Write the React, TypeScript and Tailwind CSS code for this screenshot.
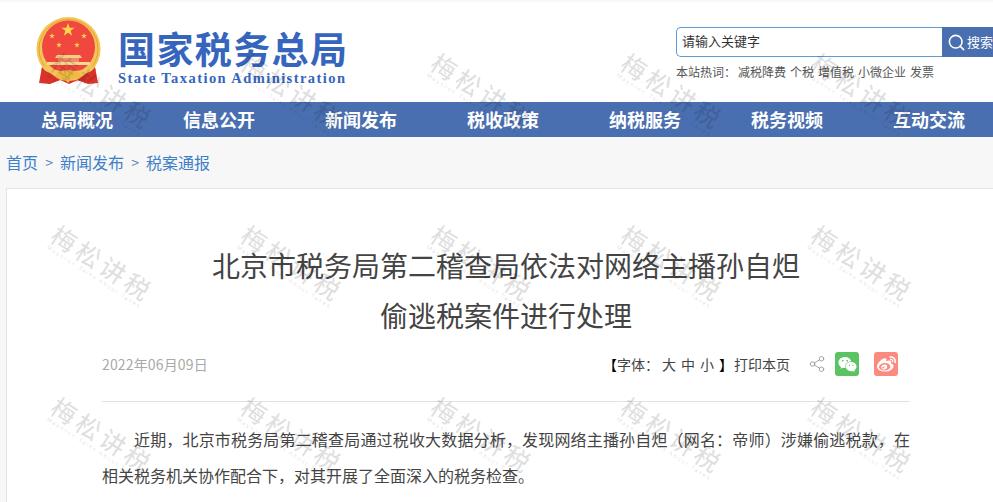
import { Search, Share2 } from "lucide-react"
import { FaWeibo, FaWeixin } from "react-icons/fa"

const navItems = ["总局概况", "信息公开", "新闻发布", "税收政策", "纳税服务", "税务视频", "互动交流"]
const hotWords = ["减税降费", "个税", "增值税", "小微企业", "发票"]
const crumbs = ["首页", "新闻发布", "税案通报"]

const starPoints = (cx: number, cy: number, r: number) =>
  Array.from({ length: 10 }, (_, i) => {
    const a = (Math.PI / 5) * i - Math.PI / 2
    const d = i % 2 === 0 ? r : r * 0.4
    return `${(cx + d * Math.cos(a)).toFixed(2)},${(cy + d * Math.sin(a)).toFixed(2)}`
  }).join(" ")

const Emblem = () => (
  <svg width="66" height="70" viewBox="0 0 66 70" className="shrink-0">
    <path d="M6 50 L3 66 L14 67 L24 63 L33 67 L42 63 L52 67 L62 66 L59 50 Z" fill="#d9342b" />
    <circle cx="32.5" cy="32" r="32" fill="#f4c65a" />
    <circle cx="32.5" cy="32" r="29.5" fill="none" stroke="#e3a32f" strokeWidth="1" />
    <circle cx="32.5" cy="30" r="26.5" fill="#f0483e" />
    <polygon points={starPoints(32, 13, 7)} fill="#fbd34d" />
    <polygon points={starPoints(16, 19, 3)} fill="#fbd34d" />
    <polygon points={starPoints(48, 19, 3)} fill="#fbd34d" />
    <polygon points={starPoints(23, 28, 3)} fill="#fbd34d" />
    <polygon points={starPoints(41, 28, 3)} fill="#fbd34d" />
    <path d="M21 38 H44 L46 41 H19 Z" fill="#f7cf80" />
    <rect x="22" y="41" width="21" height="4" fill="#f08a6a" />
    <rect x="11" y="45" width="43" height="3" fill="#f6d98a" />
    <path d="M8 49 Q32 60 57 49 L54 56 Q32 66 11 56 Z" fill="#f4c65a" />
    <path d="M21 56 Q32 50 44 56 L47 63 L37 60 L32 66 L27 60 L18 63 Z" fill="#edbb44" />
    <path d="M24 63 L12 67 L5 52 L14 56 Z" fill="#d9342b" />
    <path d="M41 63 L53 67 L60 52 L51 56 Z" fill="#d9342b" />
  </svg>
)

const Watermark = () => (
  <div className="flex h-[172px] w-[190px] items-center justify-center">
    <div className="flex rotate-[33deg] flex-col items-center whitespace-nowrap">
      <span className="text-[25px] leading-[26px] font-medium tracking-[4px] text-black/12">梅松讲税</span>
      <span className="font-['Liberation_Sans',sans-serif] text-[6px] leading-[8px] tracking-[1.5px] text-black/15">
        Maysoon Talks About Taxes
      </span>
    </div>
  </div>
)

export default function App() {
  return (
    <div className="relative h-screen overflow-hidden bg-[#f7f7f7] font-['Noto_Sans_CJK_SC',sans-serif]">
      <div className="w-[1006px]">
        <header className="mt-[2px] flex h-[100px] w-[993px] justify-between bg-white pl-[36px]">
          <div className="flex items-start pt-[15px]">
            <Emblem />
            <div className="ml-[16px] flex w-[230px] flex-col pt-[9px]">
              <span className="text-[37px] leading-[44px] font-bold tracking-[1.4px] whitespace-nowrap text-[#3565bd]">
                国家税务总局
              </span>
              <span className="mt-[1px] font-['Liberation_Serif',serif] text-[14.5px] leading-[15px] font-bold tracking-[1.43px] whitespace-nowrap text-[#3565bd]">
                State Taxation Administration
              </span>
            </div>
          </div>
          <div className="w-[317px] shrink-0 overflow-hidden pt-[25px]">
            <div className="flex h-[30px] w-[340px]">
              <div className="flex w-[266px] items-center rounded-l-[5px] border border-r-0 border-[#5a9bd8] pb-[2px] pl-[5px] text-[13px] text-[#333]">
                请输入关键字
              </div>
              <div className="flex w-[74px] items-center gap-[1px] bg-[#4a6fb0] pl-[5px] text-[13px] text-white">
                <Search size={19} strokeWidth={2} />
                搜索
              </div>
            </div>
            <div className="mt-[7px] flex items-center text-[12px] leading-[16px] text-[#555]">
              <span className="mr-[2px]">本站热词：</span>
              <div className="flex gap-[4px]">
                {hotWords.map((word) => (
                  <span key={word}>{word}</span>
                ))}
              </div>
            </div>
          </div>
        </header>

        <nav className="flex h-[35px] items-center bg-[#4a6fb0] pl-[6px]">
          {navItems.map((item) => (
            <a key={item} className="w-[142px] text-center text-[18px] font-bold text-white">
              {item}
            </a>
          ))}
        </nav>

        <div className="flex h-[51px] items-center gap-[6px] pb-[1px] pl-[6px] text-[16px] text-[#3f7fc9]">
          {crumbs.map((crumb, i) => (
            <span key={crumb} className="flex items-center gap-[6px]">
              {i > 0 && <span className="w-[10px] text-center text-[14px] text-[#5a7fb5]">&gt;</span>}
              {crumb}
            </span>
          ))}
        </div>

        <main className="ml-[6px] border border-[#e5e5e5] bg-white px-[95px] pt-[51px] pb-[40px]">
          <h1 className="text-center text-[28px] leading-[50px] font-normal text-[#444]">
            北京市税务局第二稽查局依法对网络主播孙自炟
            <br />
            偷逃税案件进行处理
          </h1>

          <div className="mt-[12px] flex h-[24px] items-center justify-between">
            <span className="text-[14px] tracking-[0.15px] text-[#a9a9a9]">2022年06月09日</span>
            <div className="flex items-center pr-[12px] text-[14px] text-[#444]">
              <span className="text-black">【</span>
              <span>字体：</span>
              <span className="ml-[3px] tracking-[5px]">大中小</span>
              <span className="text-black">】</span>
              <span className="ml-[1px]">打印本页</span>
              <Share2 size={18} strokeWidth={1} className="ml-[18px] text-[#888]" />
              <span className="ml-[9px] flex h-[24px] w-[24px] items-center justify-center rounded-[3px] bg-[#5ac463] text-white">
                <FaWeixin size={19} />
              </span>
              <span className="ml-[15px] flex h-[24px] w-[24px] items-center justify-center rounded-[3px] bg-[#fb8a7f] text-white">
                <FaWeibo size={19} />
              </span>
            </div>
          </div>

          <div className="mt-[25px] border-t border-[#e2e2e2] pt-[19px]">
            <p className="text-justify indent-[32px] text-[16px] leading-[36px] text-[#444]">
              近期，北京市税务局第二稽查局通过税收大数据分析，发现网络主播孙自炟（网名：帝师）涉嫌偷逃税款，在相关税务机关协作配合下，对其开展了全面深入的税务检查。
            </p>
          </div>
        </main>
      </div>

      <div className="pointer-events-none absolute inset-0 grid grid-cols-[repeat(5,190px)] auto-rows-[172px] pt-[8px] pl-[6px]">
        {Array.from({ length: 15 }, (_, i) => (
          <Watermark key={i} />
        ))}
      </div>
    </div>
  )
}
